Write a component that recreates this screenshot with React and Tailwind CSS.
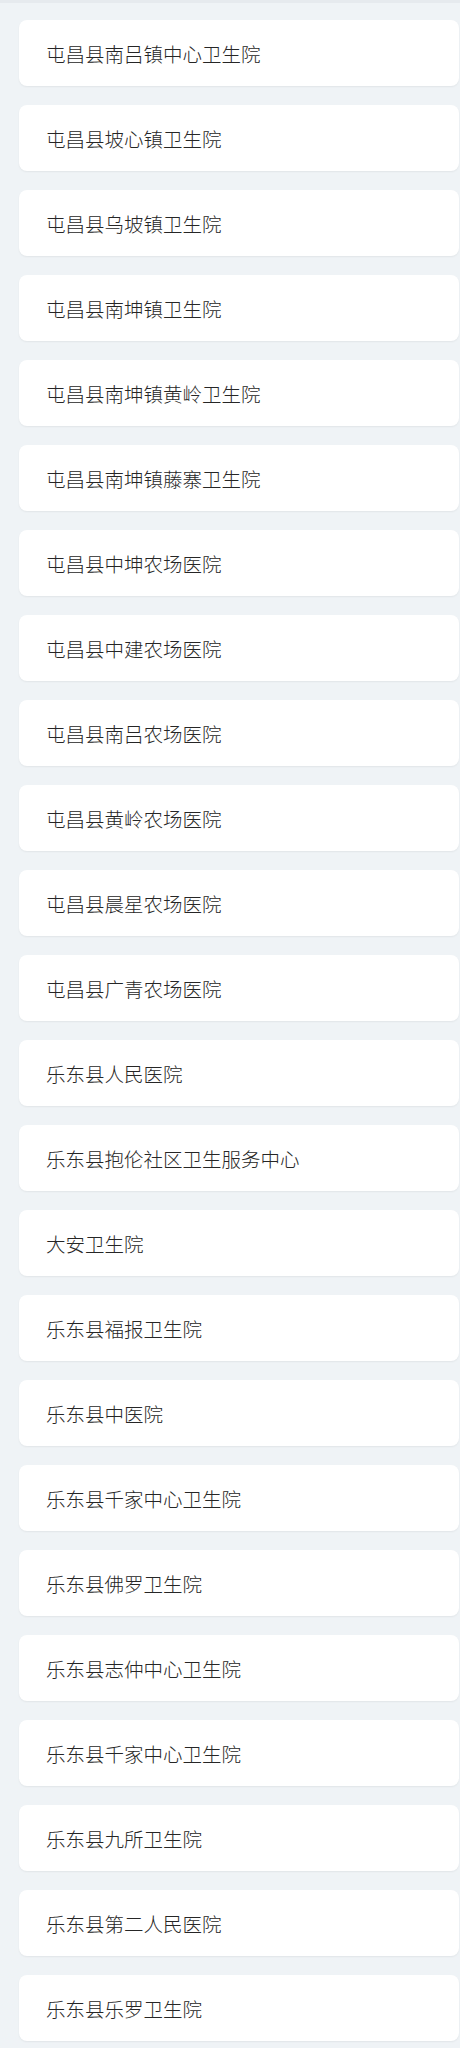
import React from 'react';

const hospitals = [
  '屯昌县南吕镇中心卫生院',
  '屯昌县坡心镇卫生院',
  '屯昌县乌坡镇卫生院',
  '屯昌县南坤镇卫生院',
  '屯昌县南坤镇黄岭卫生院',
  '屯昌县南坤镇藤寨卫生院',
  '屯昌县中坤农场医院',
  '屯昌县中建农场医院',
  '屯昌县南吕农场医院',
  '屯昌县黄岭农场医院',
  '屯昌县晨星农场医院',
  '屯昌县广青农场医院',
  '乐东县人民医院',
  '乐东县抱伦社区卫生服务中心',
  '大安卫生院',
  '乐东县福报卫生院',
  '乐东县中医院',
  '乐东县千家中心卫生院',
  '乐东县佛罗卫生院',
  '乐东县志仲中心卫生院',
  '乐东县千家中心卫生院',
  '乐东县九所卫生院',
  '乐东县第二人民医院',
  '乐东县乐罗卫生院',
];

const App = () => {
  return (
    <div
      className="min-h-[2048px] bg-[#eff3f6] border-t-[3px] border-[#e6eaee] pl-[19px] pr-px pt-[17px]"
      style={{ fontFamily: '"Noto Sans CJK SC", "Noto Sans", sans-serif' }}
    >
      <div className="flex flex-col gap-[19px]">
        {hospitals.map((name, i) => (
          <div
            key={i}
            className="h-[66px] bg-white rounded-[8px] shadow-[0_1px_2px_rgba(0,0,0,0.06)] flex items-center pl-[27px]"
          >
            <span className="text-[19.5px] leading-none font-light text-[#262626] translate-y-px">{name}</span>
          </div>
        ))}
      </div>
    </div>
  );
};

export default App;
